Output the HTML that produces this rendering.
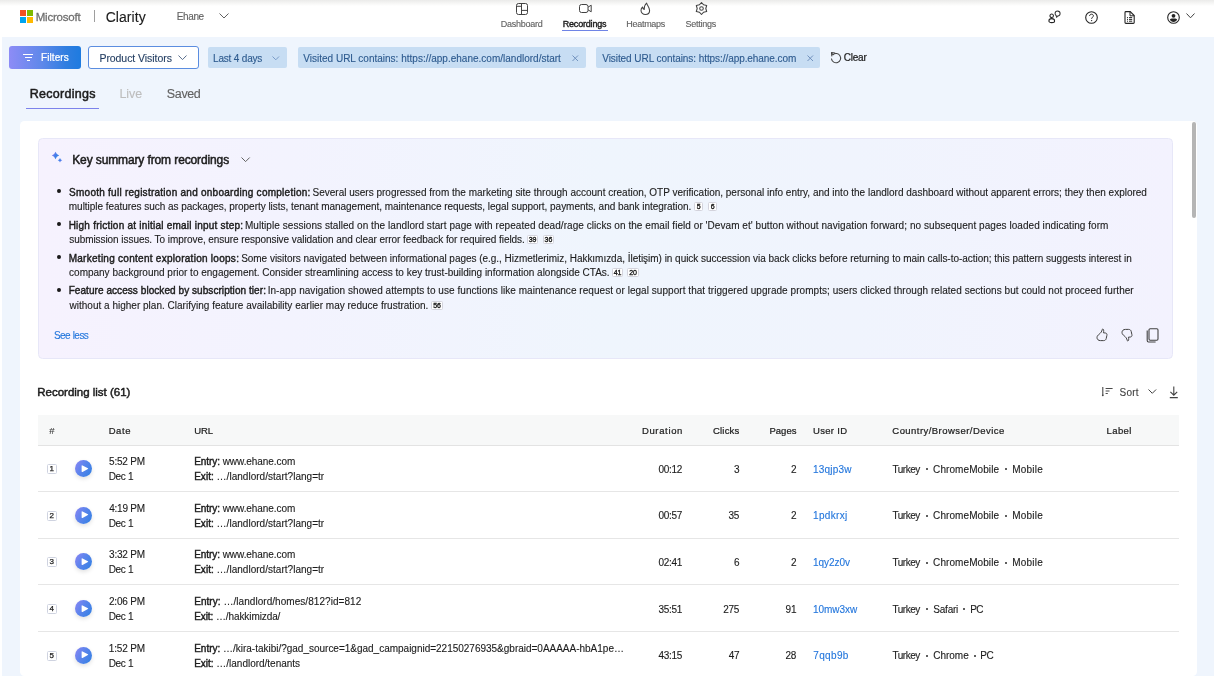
<!DOCTYPE html>
<html><head><meta charset="utf-8"><title>Clarity Recordings</title>
<style>
html,body{margin:0;padding:0;}
body{width:1214px;height:680px;position:relative;overflow:hidden;background:#ffffff;font-family:"Liberation Sans",sans-serif;}
.t{position:absolute;white-space:pre;line-height:1;font-family:"Liberation Sans",sans-serif;-webkit-text-stroke-width:0.12px;}
.t b{font-weight:400;}
.a{position:absolute;}
.bd{box-sizing:border-box;border:1px solid #d3d3dc;border-radius:1.5px;background:#fff;font:400 7px/7px 'Liberation Sans',sans-serif;-webkit-text-stroke:0.35px #1c1c1c;color:#1c1c1c;text-align:center;letter-spacing:-0.1px;will-change:transform}
.ix{box-sizing:border-box;border:1px solid #cfd3e0;border-radius:1.5px;background:#fff;font:400 8px/7.8px 'Liberation Sans',sans-serif;-webkit-text-stroke:0.25px #1c1c1c;color:#1c1c1c;text-align:center;will-change:transform}
.pb{width:17px;height:17px;border-radius:50%;background:linear-gradient(120deg,#8d86f4 0%,#5b84ec 45%,#2f80e2 100%);box-shadow:0 2px 4px rgba(0,0,0,0.12)}
svg{position:absolute;overflow:visible;}
</style></head><body>
<!-- top shadow -->
<div class="a" style="left:0;top:0;width:1214px;height:6px;background:linear-gradient(#ebebea,rgba(255,255,255,0))"></div>
<!-- page bg -->
<div class="a" style="left:2px;top:37px;width:1212px;height:639px;background:#eff5fd"></div>
<!-- MS logo -->
<div class="a" style="left:20px;top:10px;width:6px;height:6px;background:#f25022"></div>
<div class="a" style="left:27px;top:10px;width:6px;height:6px;background:#7fba00"></div>
<div class="a" style="left:20px;top:17px;width:6px;height:6px;background:#00a4ef"></div>
<div class="a" style="left:27px;top:17px;width:6px;height:6px;background:#ffb900"></div>
<div class="a" style="left:93.5px;top:9.5px;width:1.2px;height:12.5px;background:#9e9e9e"></div>
<svg style="left:219px;top:13px" width="10" height="6" viewBox="0 0 10 6"><path d="M0.5 0.5 L5 5 L9.5 0.5" fill="none" stroke="#616161" stroke-width="1"/></svg>
<!-- nav icons -->
<svg style="left:516px;top:3px" width="12" height="12" viewBox="0 0 12 12"><rect x="0.5" y="0.5" width="11" height="11" rx="2" fill="none" stroke="#424242" stroke-width="1"/><path d="M5.5 0.5V11.5M0.5 3.3H5.5M5.5 7.4H11.5" stroke="#424242" stroke-width="1" fill="none"/></svg>
<svg style="left:578.5px;top:4px" width="13" height="9" viewBox="0 0 13 9"><rect x="0.5" y="0.5" width="8.5" height="8" rx="2" fill="none" stroke="#424242" stroke-width="1"/><path d="M9 3.2 L12.2 1.2 V7.8 L9 5.8" fill="none" stroke="#424242" stroke-width="1" stroke-linejoin="round"/></svg>
<svg style="left:640px;top:2px" width="11" height="13" viewBox="0 0 11 13"><path d="M6.6 1 C6.9 3.2 9.6 5 9.6 8.4 C9.6 10.8 7.8 12.4 5.4 12.4 C3 12.4 1 10.8 1 8.5 C1 7 1.6 5.8 2.6 5 C2.7 6.4 3.3 7.2 4.2 7.5 C4 5.2 5 2.6 6.6 1 Z" fill="none" stroke="#424242" stroke-width="1.05" stroke-linejoin="round"/></svg>
<svg style="left:695px;top:2px" width="13" height="13" viewBox="0 0 13 13"><path d="M6.50 0.50 L8.65 2.78 L11.70 3.50 L10.80 6.50 L11.70 9.50 L8.65 10.22 L6.50 12.50 L4.35 10.22 L1.30 9.50 L2.20 6.50 L1.30 3.50 L4.35 2.78 Z" fill="none" stroke="#424242" stroke-width="1.05" stroke-linejoin="round"/><circle cx="6.5" cy="6.5" r="1.8" fill="none" stroke="#424242" stroke-width="1.05"/></svg>
<div class="a" style="left:562px;top:29.5px;width:46px;height:1.5px;background:#6f84e6"></div>
<!-- right header icons -->
<svg style="left:1047px;top:10px" width="16" height="14" viewBox="0 0 16 14"><circle cx="4.7" cy="5.8" r="1.75" fill="none" stroke="#242424" stroke-width="1.05"/><path d="M1.9 10.9 C1.9 9.4 3 8.6 4.7 8.6 C6.4 8.6 7.6 9.4 7.6 10.9 C7.6 12 6.5 12.6 4.7 12.6 C2.9 12.6 1.9 12 1.9 10.9 Z" fill="none" stroke="#242424" stroke-width="1.05"/><path d="M10.6 1.1 C12 1.1 13.1 2.2 13.1 3.6 C13.1 5 12 6.1 10.6 6.1 L9.5 7.3 L9.3 5.8 C8.6 5.3 8.1 4.5 8.1 3.6 C8.1 2.2 9.2 1.1 10.6 1.1 Z" fill="none" stroke="#3a3a3a" stroke-width="1.05" stroke-linejoin="round"/></svg>
<svg style="left:1085px;top:10.5px" width="13" height="13" viewBox="0 0 13 13"><circle cx="6.5" cy="6.5" r="5.8" fill="none" stroke="#242424" stroke-width="1.1"/><path d="M4.6 5 C4.6 3.8 5.5 3.2 6.5 3.2 C7.5 3.2 8.4 3.8 8.4 4.9 C8.4 6.2 6.6 6.3 6.6 7.8" fill="none" stroke="#242424" stroke-width="1"/><circle cx="6.6" cy="9.6" r="0.7" fill="#242424"/></svg>
<svg style="left:1123.5px;top:10.5px" width="11" height="13" viewBox="0 0 11 13"><path d="M1 1.5 C1 1 1.4 0.6 1.9 0.6 H6.2 L10.2 4.6 V11.6 C10.2 12.1 9.8 12.4 9.3 12.4 H1.9 C1.4 12.4 1 12.1 1 11.6 Z" fill="none" stroke="#242424" stroke-width="1.1"/><path d="M6 0.6 V4.8 H10.2" fill="none" stroke="#242424" stroke-width="1"/><path d="M3 6.6 H4 M5 6.6 H8.2 M3 8.4 H4 M5 8.4 H8.2 M3 10.2 H4 M5 10.2 H8.2" stroke="#242424" stroke-width="1"/></svg>
<svg style="left:1166.5px;top:10.5px" width="13" height="13" viewBox="0 0 13 13"><circle cx="6.5" cy="6.5" r="5.8" fill="none" stroke="#242424" stroke-width="1.1"/><circle cx="6.5" cy="4.8" r="1.9" fill="#242424"/><path d="M2.8 8.6 C3.2 7.7 4 7.4 6.5 7.4 C9 7.4 9.8 7.7 10.2 8.6 C9.5 10.2 8.2 11 6.5 11 C4.8 11 3.5 10.2 2.8 8.6 Z" fill="#242424"/></svg>
<svg style="left:1186px;top:13px" width="10" height="6" viewBox="0 0 10 6"><path d="M0.5 0.5 L4.5 4.8 L8.5 0.5" fill="none" stroke="#424242" stroke-width="1"/></svg>
<!-- filter bar -->
<div class="a" style="left:9px;top:46px;width:71.5px;height:23px;border-radius:3px;background:linear-gradient(90deg,#8d8cf6 0%,#5f88ea 45%,#2f7ee0 80%,#1e7be0 100%)"></div>
<div class="a" style="left:23.3px;top:54px;width:10px;height:1.2px;background:#fff"></div>
<div class="a" style="left:25px;top:57px;width:6.6px;height:1.2px;background:#fff"></div>
<div class="a" style="left:26.6px;top:60px;width:3.4px;height:1.2px;background:#fff"></div>
<div class="a" style="left:87.6px;top:46.2px;width:109px;height:20.4px;border:1px solid #5b8de0;border-radius:3px;background:#fff"></div>
<svg style="left:177.5px;top:55px" width="10" height="6" viewBox="0 0 10 6"><path d="M0.5 0.5 L4.5 4.6 L8.5 0.5" fill="none" stroke="#5a6f8e" stroke-width="1"/></svg>
<div class="a" style="left:208px;top:47px;width:79px;height:21px;border-radius:2px;background:#c7ddf3"></div>
<svg style="left:271.5px;top:56px" width="8" height="5" viewBox="0 0 8 5"><path d="M0.5 0.5 L3.8 3.8 L7 0.5" fill="none" stroke="#7a9cc8" stroke-width="1"/></svg>
<div class="a" style="left:297.7px;top:47px;width:288px;height:20.7px;border-radius:2px;background:#c7ddf3"></div>
<svg style="left:572px;top:55px" width="7" height="7" viewBox="0 0 7 7"><path d="M0.5 0.5 L6 6 M6 0.5 L0.5 6" stroke="#6d8dba" stroke-width="0.95"/></svg>
<div class="a" style="left:596.4px;top:47px;width:224px;height:20.7px;border-radius:2px;background:#c7ddf3"></div>
<svg style="left:807px;top:55px" width="7" height="7" viewBox="0 0 7 7"><path d="M0.5 0.5 L6 6 M6 0.5 L0.5 6" stroke="#6d8dba" stroke-width="0.95"/></svg>
<svg style="left:829.5px;top:51px" width="12" height="13" viewBox="0 0 12 13"><path d="M1.6 2 L2.9 3.8 A4.6 4.6 0 1 1 1.5 7.9" fill="none" stroke="#424242" stroke-width="1.05" stroke-linecap="round"/><path d="M4.9 1.9 L1.5 1.6 L1.8 5" fill="none" stroke="#424242" stroke-width="1.05" stroke-linejoin="round" stroke-linecap="round"/></svg>
<!-- tabs underline -->
<div class="a" style="left:26px;top:107.6px;width:73px;height:1.6px;background:#7c83eb"></div>
<!-- card -->
<div class="a" style="left:20.4px;top:121px;width:1176.7px;height:554.5px;border-radius:4.5px;background:#ffffff"></div>
<div class="a" style="left:1191.8px;top:122px;width:4.4px;height:95.6px;border-radius:2.2px;background:#b5b5b5"></div>
<!-- summary panel -->
<div class="a" style="left:37.8px;top:138px;width:1133.2px;height:218.5px;border-radius:4.5px;border:1px solid #e7e7f8;background:linear-gradient(90deg,#f6f2fe 0%,#f3f3fe 22%,#eff5fd 50%,#f0f4fd 72%,#f3f2fe 100%)"></div>
<svg style="left:51px;top:151px" width="13" height="12" viewBox="0 0 13 12"><defs><linearGradient id="sg" x1="0" y1="0.2" x2="1" y2="0.8"><stop offset="0" stop-color="#9b7df5"/><stop offset="0.5" stop-color="#3f7fe8"/><stop offset="1" stop-color="#3a84e6"/></linearGradient><linearGradient id="sg2" x1="0" y1="0" x2="1" y2="1"><stop offset="0" stop-color="#3a84e6"/><stop offset="0.6" stop-color="#4a80ec"/><stop offset="1" stop-color="#9b7df5"/></linearGradient></defs><path d="M4.5 0.8 Q5.4 3.6 8.2 4.5 Q5.4 5.4 4.5 8.2 Q3.6 5.4 0.8 4.5 Q3.6 3.6 4.5 0.8 Z" fill="url(#sg)"/><path d="M9 6.9 Q9.5 8.7 11.3 9.2 Q9.5 9.7 9 11.5 Q8.5 9.7 6.7 9.2 Q8.5 8.7 9 6.9 Z" fill="url(#sg2)"/></svg>
<svg style="left:240.5px;top:156.5px" width="10" height="6" viewBox="0 0 10 6"><path d="M0.5 0.5 L4.6 4.6 L8.7 0.5" fill="none" stroke="#616161" stroke-width="1"/></svg>
<!-- bullets --><div class="a" style="left:56.9px;top:189.35px;width:3.8px;height:3.8px;border-radius:50%;background:#1a1a1a"></div><div class="a" style="left:56.9px;top:222.35px;width:3.8px;height:3.8px;border-radius:50%;background:#1a1a1a"></div><div class="a" style="left:56.9px;top:255.25px;width:3.8px;height:3.8px;border-radius:50%;background:#1a1a1a"></div><div class="a" style="left:56.9px;top:288.15px;width:3.8px;height:3.8px;border-radius:50%;background:#1a1a1a"></div>




<!-- badges -->
<div class="a bd" style="left:694.4px;top:201.6px;width:9.2px;height:9px">5</div><div class="a bd" style="left:707.5px;top:201.6px;width:9.3px;height:9px">6</div><div class="a bd" style="left:527.4px;top:234.5px;width:10.9px;height:9px">39</div><div class="a bd" style="left:542.6px;top:234.5px;width:10.8px;height:9px">36</div><div class="a bd" style="left:612.0px;top:267.9px;width:11.2px;height:9px">41</div><div class="a bd" style="left:626.8px;top:267.9px;width:11.9px;height:9px">20</div><div class="a bd" style="left:431.3px;top:300.8px;width:11.9px;height:9px">56</div>
<!-- feedback icons -->
<svg style="left:1095.5px;top:328px" width="12" height="14" viewBox="0 0 12 14"><path d="M6.8 1 C7.8 1.2 7.9 2.8 7.4 4.8 L9.5 5 C10.6 5.1 11.2 6.2 10.9 7.4 L10.2 10.6 C9.9 11.9 8.9 12.6 7.6 12.6 H4.4 C2.3 12.6 1 11.3 1 9.6 C1 8.1 1.9 7.2 3.1 6.3 C4.6 5.1 5.8 3.6 6.2 1.7 C6.3 1.2 6.5 1 6.8 1 Z" fill="none" stroke="#424242" stroke-width="1" stroke-linejoin="round"/></svg>
<svg style="left:1120.5px;top:327.5px" width="12" height="14" viewBox="0 0 12 14"><path transform="translate(0 14) scale(1 -1)" d="M6.8 1 C7.8 1.2 7.9 2.8 7.4 4.8 L9.5 5 C10.6 5.1 11.2 6.2 10.9 7.4 L10.2 10.6 C9.9 11.9 8.9 12.6 7.6 12.6 H4.4 C2.3 12.6 1 11.3 1 9.6 C1 8.1 1.9 7.2 3.1 6.3 C4.6 5.1 5.8 3.6 6.2 1.7 C6.3 1.2 6.5 1 6.8 1 Z" fill="none" stroke="#424242" stroke-width="1" stroke-linejoin="round"/></svg>
<svg style="left:1145.5px;top:327.5px" width="13" height="15" viewBox="0 0 13 15"><rect x="3" y="0.7" width="9" height="11.6" rx="1.2" fill="none" stroke="#424242" stroke-width="1.1"/><path d="M1.2 2.6 V12.6 C1.2 13.4 1.8 14 2.6 14 H9.6" fill="none" stroke="#424242" stroke-width="1.1"/></svg>
<!-- sort / download -->
<svg style="left:1100px;top:386px" width="14" height="11" viewBox="0 0 14 11"><path d="M2.8 1 V9.2" fill="none" stroke="#424242" stroke-width="1.05"/><circle cx="2.8" cy="9.3" r="0.9" fill="#424242"/><path d="M5.6 2.5 H12.6 M5.6 5 H9.5 M5.6 7.5 H7.8" stroke="#4a4a4a" stroke-width="1"/></svg>
<svg style="left:1147.5px;top:389px" width="10" height="6" viewBox="0 0 10 6"><path d="M0.5 0.5 L4.3 4.3 L8.1 0.5" fill="none" stroke="#424242" stroke-width="1"/></svg>
<svg style="left:1168.5px;top:385.5px" width="10" height="13" viewBox="0 0 10 13"><path d="M4.8 0.5 V9 M1.4 5.8 L4.8 9.2 L8.2 5.8 M0.8 11.6 H8.8" fill="none" stroke="#424242" stroke-width="1.1"/></svg>
<!-- table -->
<div class="a" style="left:38px;top:415px;width:1141px;height:30px;background:#f7f8f8;border-bottom:1px solid #e3e3e3"></div>
<div class="a ix" style="left:47.2px;top:463.90px;width:9.6px;height:9.6px">1</div><div class="a pb" style="left:75px;top:460.00px"></div><svg style="left:80.5px;top:464.70px" width="8" height="8" viewBox="0 0 8 8"><path d="M0.6 1 Q0.6 0 1.5 0.4 L6.9 3.2 Q7.6 3.6 6.9 4 L1.5 6.9 Q0.6 7.3 0.6 6.3 Z" fill="#fff"/></svg><div class="a" style="left:38px;top:491.15px;width:1141px;height:1px;background:#e6e6e6"></div><div class="a ix" style="left:47.2px;top:510.55px;width:9.6px;height:9.6px">2</div><div class="a pb" style="left:75px;top:506.65px"></div><svg style="left:80.5px;top:511.35px" width="8" height="8" viewBox="0 0 8 8"><path d="M0.6 1 Q0.6 0 1.5 0.4 L6.9 3.2 Q7.6 3.6 6.9 4 L1.5 6.9 Q0.6 7.3 0.6 6.3 Z" fill="#fff"/></svg><div class="a" style="left:38px;top:537.80px;width:1141px;height:1px;background:#e6e6e6"></div><div class="a ix" style="left:47.2px;top:557.20px;width:9.6px;height:9.6px">3</div><div class="a pb" style="left:75px;top:553.30px"></div><svg style="left:80.5px;top:558.00px" width="8" height="8" viewBox="0 0 8 8"><path d="M0.6 1 Q0.6 0 1.5 0.4 L6.9 3.2 Q7.6 3.6 6.9 4 L1.5 6.9 Q0.6 7.3 0.6 6.3 Z" fill="#fff"/></svg><div class="a" style="left:38px;top:584.45px;width:1141px;height:1px;background:#e6e6e6"></div><div class="a ix" style="left:47.2px;top:603.85px;width:9.6px;height:9.6px">4</div><div class="a pb" style="left:75px;top:599.95px"></div><svg style="left:80.5px;top:604.65px" width="8" height="8" viewBox="0 0 8 8"><path d="M0.6 1 Q0.6 0 1.5 0.4 L6.9 3.2 Q7.6 3.6 6.9 4 L1.5 6.9 Q0.6 7.3 0.6 6.3 Z" fill="#fff"/></svg><div class="a" style="left:38px;top:631.10px;width:1141px;height:1px;background:#e6e6e6"></div><div class="a ix" style="left:47.2px;top:650.50px;width:9.6px;height:9.6px">5</div><div class="a pb" style="left:75px;top:646.60px"></div><svg style="left:80.5px;top:651.30px" width="8" height="8" viewBox="0 0 8 8"><path d="M0.6 1 Q0.6 0 1.5 0.4 L6.9 3.2 Q7.6 3.6 6.9 4 L1.5 6.9 Q0.6 7.3 0.6 6.3 Z" fill="#fff"/></svg><div class="a" style="left:926.00px;top:468.20px;width:2.2px;height:2.2px;border-radius:50%;background:#2a2a2a"></div><div class="a" style="left:1004.70px;top:468.20px;width:2.2px;height:2.2px;border-radius:50%;background:#2a2a2a"></div><div class="a" style="left:926.00px;top:514.85px;width:2.2px;height:2.2px;border-radius:50%;background:#2a2a2a"></div><div class="a" style="left:1004.70px;top:514.85px;width:2.2px;height:2.2px;border-radius:50%;background:#2a2a2a"></div><div class="a" style="left:926.00px;top:561.50px;width:2.2px;height:2.2px;border-radius:50%;background:#2a2a2a"></div><div class="a" style="left:1004.70px;top:561.50px;width:2.2px;height:2.2px;border-radius:50%;background:#2a2a2a"></div><div class="a" style="left:926.00px;top:608.15px;width:2.2px;height:2.2px;border-radius:50%;background:#2a2a2a"></div><div class="a" style="left:963.30px;top:608.15px;width:2.2px;height:2.2px;border-radius:50%;background:#2a2a2a"></div><div class="a" style="left:926.00px;top:654.80px;width:2.2px;height:2.2px;border-radius:50%;background:#2a2a2a"></div><div class="a" style="left:974.00px;top:654.80px;width:2.2px;height:2.2px;border-radius:50%;background:#2a2a2a"></div>

<div class="a" style="left:0;top:0;width:1214px;height:680px;will-change:transform"><span class="t" style="left:35.76px;top:11.57px;font-size:11.5px;letter-spacing:-0.215px;word-spacing:0.129px;color:#6e6e6e"><b style="-webkit-text-stroke-width:0.26px">Microsoft</b></span><span class="t" style="left:105.69px;top:10.15px;font-size:14px;letter-spacing:0.045px;word-spacing:0.000px;color:#1c1c1c">Clarity</span><span class="t" style="left:176.78px;top:12.04px;font-size:10px;letter-spacing:-0.388px;word-spacing:0.233px;color:#616161">Ehane</span><span class="t" style="left:500.76px;top:19.58px;font-size:9px;letter-spacing:-0.251px;word-spacing:0.151px;color:#616161">Dashboard</span><span class="t" style="left:562.76px;top:19.58px;font-size:9px;letter-spacing:-0.195px;word-spacing:0.117px;color:#1c1c1c"><b style="-webkit-text-stroke-width:0.39px">Recordings</b></span><span class="t" style="left:626.26px;top:19.58px;font-size:9px;letter-spacing:-0.279px;word-spacing:0.168px;color:#616161">Heatmaps</span><span class="t" style="left:685.59px;top:19.58px;font-size:9px;letter-spacing:-0.255px;word-spacing:0.153px;color:#616161">Settings</span><span class="t" style="left:40.98px;top:53.14px;font-size:10px;letter-spacing:0.093px;word-spacing:0.000px;color:#ffffff"><b style="-webkit-text-stroke-width:0.23px">Filters</b></span><span class="t" style="left:99.44px;top:53.01px;font-size:10.5px;letter-spacing:-0.062px;word-spacing:0.037px;color:#1f3a5f">Product Visitors</span><span class="t" style="left:213.08px;top:53.84px;font-size:10px;letter-spacing:-0.223px;word-spacing:0.134px;color:#2d5a8e">Last 4 days</span><span class="t" style="left:303.26px;top:53.53px;font-size:10px;letter-spacing:0.005px;word-spacing:0.000px;color:#2d5a8e">Visited URL contains: https://app.ehane.com/landlord/start</span><span class="t" style="left:602.26px;top:53.53px;font-size:10px;letter-spacing:-0.068px;word-spacing:0.041px;color:#2d5a8e">Visited URL contains: https://app.ehane.com</span><span class="t" style="left:843.79px;top:53.14px;font-size:10px;letter-spacing:-0.231px;word-spacing:0.138px;color:#1c1c1c"><b style="-webkit-text-stroke-width:0.23px">Clear</b></span><span class="t" style="left:29.67px;top:87.92px;font-size:12.5px;letter-spacing:0.283px;word-spacing:0.000px;color:#1c1c1c"><b style="-webkit-text-stroke-width:0.51px">Recordings</b></span><span class="t" style="left:119.47px;top:87.92px;font-size:12.5px;letter-spacing:-0.083px;word-spacing:0.050px;color:#bdbdbd">Live</span><span class="t" style="left:166.83px;top:87.92px;font-size:12.5px;letter-spacing:-0.367px;word-spacing:0.220px;color:#616161">Saved</span><span class="t" style="left:72.22px;top:153.74px;font-size:12px;letter-spacing:-0.129px;word-spacing:0.077px;color:#1c1c1c"><b style="-webkit-text-stroke-width:0.49px">Key summary from recordings</b></span><span class="t" style="left:69.05px;top:187.63px;font-size:10px;letter-spacing:0.256px;word-spacing:0.000px;color:#1c1c1c"><b style="-webkit-text-stroke-width:0.42px">Smooth full registration and onboarding completion:</b></span><span class="t" style="left:312.55px;top:187.63px;font-size:10px;letter-spacing:-0.001px;word-spacing:0.001px;color:#1c1c1c">Several users progressed from the marketing site through account creation, OTP verification, personal info entry, and into the landlord dashboard without apparent errors; they then explored</span><span class="t" style="left:68.84px;top:201.63px;font-size:10px;letter-spacing:-0.040px;word-spacing:0.024px;color:#1c1c1c">multiple features such as packages, property lists, tenant management, maintenance requests, legal support, payments, and bank integration.</span><span class="t" style="left:68.68px;top:220.63px;font-size:10px;letter-spacing:0.228px;word-spacing:0.000px;color:#1c1c1c"><b style="-webkit-text-stroke-width:0.42px">High friction at initial email input step:</b></span><span class="t" style="left:244.98px;top:220.63px;font-size:10px;letter-spacing:0.056px;word-spacing:0.000px;color:#1c1c1c">Multiple sessions stalled on the landlord start page with repeated dead/rage clicks on the email field or &#x27;Devam et&#x27; button without navigation forward; no subsequent pages loaded indicating form</span><span class="t" style="left:69.22px;top:234.53px;font-size:10px;letter-spacing:-0.064px;word-spacing:0.039px;color:#1c1c1c">submission issues. To improve, ensure responsive validation and clear error feedback for required fields.</span><span class="t" style="left:68.68px;top:253.53px;font-size:10px;letter-spacing:0.274px;word-spacing:0.000px;color:#1c1c1c"><b style="-webkit-text-stroke-width:0.42px">Marketing content exploration loops:</b></span><span class="t" style="left:241.15px;top:253.53px;font-size:10px;letter-spacing:-0.031px;word-spacing:0.019px;color:#1c1c1c">Some visitors navigated between informational pages (e.g., Hizmetlerimiz, Hakkımızda, İletişim) in quick succession via back clicks before returning to main calls-to-action; this pattern suggests interest in</span><span class="t" style="left:69.08px;top:267.94px;font-size:10px;letter-spacing:-0.006px;word-spacing:0.004px;color:#1c1c1c">company background prior to engagement. Consider streamlining access to key trust-building information alongside CTAs.</span><span class="t" style="left:68.68px;top:286.44px;font-size:10px;letter-spacing:0.063px;word-spacing:0.000px;color:#1c1c1c"><b style="-webkit-text-stroke-width:0.42px">Feature access blocked by subscription tier:</b></span><span class="t" style="left:267.68px;top:286.44px;font-size:10px;letter-spacing:0.046px;word-spacing:0.000px;color:#1c1c1c">In-app navigation showed attempts to use functions like maintenance request or legal support that triggered upgrade prompts; users clicked through related sections but could not proceed further</span><span class="t" style="left:69.51px;top:300.84px;font-size:10px;letter-spacing:0.010px;word-spacing:0.000px;color:#1c1c1c">without a higher plan. Clarifying feature availability earlier may reduce frustration.</span><span class="t" style="left:53.95px;top:331.24px;font-size:10px;letter-spacing:-0.537px;word-spacing:0.322px;color:#2376dc">See less</span><span class="t" style="left:37.26px;top:386.97px;font-size:11.5px;letter-spacing:-0.009px;word-spacing:0.006px;color:#1c1c1c"><b style="-webkit-text-stroke-width:0.47px">Recording list (61)</b></span><span class="t" style="left:1119.55px;top:387.84px;font-size:10px;letter-spacing:0.196px;word-spacing:0.000px;color:#424242">Sort</span><span class="t" style="left:49.26px;top:425.76px;font-size:9.5px;letter-spacing:0.000px;word-spacing:0.000px;color:#3a3a3a">#</span><span class="t" style="left:108.72px;top:425.76px;font-size:9.5px;letter-spacing:0.545px;word-spacing:0.000px;color:#1c1c1c"><b style="-webkit-text-stroke-width:0.22px">Date</b></span><span class="t" style="left:194.27px;top:425.76px;font-size:9.5px;letter-spacing:-0.078px;word-spacing:0.047px;color:#1c1c1c"><b style="-webkit-text-stroke-width:0.22px">URL</b></span><span class="t" style="left:641.92px;top:425.76px;font-size:9.5px;letter-spacing:0.655px;word-spacing:0.000px;color:#1c1c1c"><b style="-webkit-text-stroke-width:0.22px">Duration</b></span><span class="t" style="left:712.92px;top:425.76px;font-size:9.5px;letter-spacing:0.219px;word-spacing:0.000px;color:#1c1c1c"><b style="-webkit-text-stroke-width:0.22px">Clicks</b></span><span class="t" style="left:769.42px;top:425.76px;font-size:9.5px;letter-spacing:0.046px;word-spacing:0.000px;color:#1c1c1c"><b style="-webkit-text-stroke-width:0.22px">Pages</b></span><span class="t" style="left:813.07px;top:425.76px;font-size:9.5px;letter-spacing:0.298px;word-spacing:0.000px;color:#1c1c1c"><b style="-webkit-text-stroke-width:0.22px">User ID</b></span><span class="t" style="left:892.32px;top:425.76px;font-size:9.5px;letter-spacing:0.452px;word-spacing:0.000px;color:#1c1c1c"><b style="-webkit-text-stroke-width:0.22px">Country/Browser/Device</b></span><span class="t" style="left:1106.52px;top:425.76px;font-size:9.5px;letter-spacing:0.418px;word-spacing:0.000px;color:#1c1c1c"><b style="-webkit-text-stroke-width:0.22px">Label</b></span><span class="t" style="left:109.10px;top:457.04px;font-size:10px;letter-spacing:-0.226px;word-spacing:0.136px;color:#1c1c1c">5:52 PM</span><span class="t" style="left:108.68px;top:472.04px;font-size:10px;letter-spacing:-0.328px;word-spacing:0.197px;color:#1c1c1c">Dec 1</span><span class="t" style="left:194.18px;top:457.04px;font-size:10px;letter-spacing:-0.059px;word-spacing:0.035px;color:#1c1c1c"><b style="-webkit-text-stroke-width:0.42px">Entry:</b> www.ehane.com</span><span class="t" style="left:194.18px;top:472.04px;font-size:10px;letter-spacing:0.026px;word-spacing:0.000px;color:#1c1c1c"><b style="-webkit-text-stroke-width:0.42px">Exit:</b> …/landlord/start?lang=tr</span><span class="t" style="left:658.41px;top:464.84px;font-size:10px;letter-spacing:-0.283px;word-spacing:0.170px;color:#1c1c1c">00:12</span><span class="t" style="left:733.88px;top:464.84px;font-size:10px;letter-spacing:-0.250px;word-spacing:0.150px;color:#1c1c1c">3</span><span class="t" style="left:790.94px;top:464.84px;font-size:10px;letter-spacing:-0.250px;word-spacing:0.150px;color:#1c1c1c">2</span><span class="t" style="left:813.04px;top:464.84px;font-size:10px;letter-spacing:0.214px;word-spacing:0.000px;color:#2376dc">13qjp3w</span><span class="t" style="left:892.58px;top:464.84px;font-size:10px;letter-spacing:-0.509px;word-spacing:0.306px;color:#1c1c1c">Turkey</span><span class="t" style="left:933.09px;top:464.84px;font-size:10px;letter-spacing:0.084px;word-spacing:0.000px;color:#1c1c1c">ChromeMobile</span><span class="t" style="left:1012.18px;top:464.84px;font-size:10px;letter-spacing:0.221px;word-spacing:0.000px;color:#1c1c1c">Mobile</span><span class="t" style="left:109.27px;top:503.69px;font-size:10px;letter-spacing:-0.258px;word-spacing:0.155px;color:#1c1c1c">4:19 PM</span><span class="t" style="left:108.68px;top:518.68px;font-size:10px;letter-spacing:-0.328px;word-spacing:0.197px;color:#1c1c1c">Dec 1</span><span class="t" style="left:194.18px;top:503.69px;font-size:10px;letter-spacing:-0.059px;word-spacing:0.035px;color:#1c1c1c"><b style="-webkit-text-stroke-width:0.42px">Entry:</b> www.ehane.com</span><span class="t" style="left:194.18px;top:518.68px;font-size:10px;letter-spacing:0.026px;word-spacing:0.000px;color:#1c1c1c"><b style="-webkit-text-stroke-width:0.42px">Exit:</b> …/landlord/start?lang=tr</span><span class="t" style="left:658.41px;top:511.49px;font-size:10px;letter-spacing:-0.283px;word-spacing:0.170px;color:#1c1c1c">00:57</span><span class="t" style="left:728.55px;top:511.49px;font-size:10px;letter-spacing:-0.250px;word-spacing:0.150px;color:#1c1c1c">35</span><span class="t" style="left:790.94px;top:511.49px;font-size:10px;letter-spacing:-0.250px;word-spacing:0.150px;color:#1c1c1c">2</span><span class="t" style="left:813.04px;top:511.49px;font-size:10px;letter-spacing:0.333px;word-spacing:0.000px;color:#2376dc">1pdkrxj</span><span class="t" style="left:892.58px;top:511.49px;font-size:10px;letter-spacing:-0.509px;word-spacing:0.306px;color:#1c1c1c">Turkey</span><span class="t" style="left:933.09px;top:511.49px;font-size:10px;letter-spacing:0.084px;word-spacing:0.000px;color:#1c1c1c">ChromeMobile</span><span class="t" style="left:1012.18px;top:511.49px;font-size:10px;letter-spacing:0.221px;word-spacing:0.000px;color:#1c1c1c">Mobile</span><span class="t" style="left:109.12px;top:550.33px;font-size:10px;letter-spacing:-0.230px;word-spacing:0.138px;color:#1c1c1c">3:32 PM</span><span class="t" style="left:108.68px;top:565.33px;font-size:10px;letter-spacing:-0.328px;word-spacing:0.197px;color:#1c1c1c">Dec 1</span><span class="t" style="left:194.18px;top:550.33px;font-size:10px;letter-spacing:-0.059px;word-spacing:0.035px;color:#1c1c1c"><b style="-webkit-text-stroke-width:0.42px">Entry:</b> www.ehane.com</span><span class="t" style="left:194.18px;top:565.33px;font-size:10px;letter-spacing:0.026px;word-spacing:0.000px;color:#1c1c1c"><b style="-webkit-text-stroke-width:0.42px">Exit:</b> …/landlord/start?lang=tr</span><span class="t" style="left:658.41px;top:558.13px;font-size:10px;letter-spacing:-0.286px;word-spacing:0.172px;color:#1c1c1c">02:41</span><span class="t" style="left:733.88px;top:558.13px;font-size:10px;letter-spacing:-0.250px;word-spacing:0.150px;color:#1c1c1c">6</span><span class="t" style="left:790.94px;top:558.13px;font-size:10px;letter-spacing:-0.250px;word-spacing:0.150px;color:#1c1c1c">2</span><span class="t" style="left:813.04px;top:558.13px;font-size:10px;letter-spacing:-0.042px;word-spacing:0.025px;color:#2376dc">1qy2z0v</span><span class="t" style="left:892.58px;top:558.13px;font-size:10px;letter-spacing:-0.509px;word-spacing:0.306px;color:#1c1c1c">Turkey</span><span class="t" style="left:933.09px;top:558.13px;font-size:10px;letter-spacing:0.084px;word-spacing:0.000px;color:#1c1c1c">ChromeMobile</span><span class="t" style="left:1012.18px;top:558.13px;font-size:10px;letter-spacing:0.221px;word-spacing:0.000px;color:#1c1c1c">Mobile</span><span class="t" style="left:109.00px;top:596.99px;font-size:10px;letter-spacing:-0.207px;word-spacing:0.124px;color:#1c1c1c">2:06 PM</span><span class="t" style="left:108.68px;top:611.99px;font-size:10px;letter-spacing:-0.328px;word-spacing:0.197px;color:#1c1c1c">Dec 1</span><span class="t" style="left:194.18px;top:596.99px;font-size:10px;letter-spacing:0.050px;word-spacing:0.000px;color:#1c1c1c"><b style="-webkit-text-stroke-width:0.42px">Entry:</b> …/landlord/homes/812?id=812</span><span class="t" style="left:194.18px;top:611.99px;font-size:10px;letter-spacing:-0.091px;word-spacing:0.055px;color:#1c1c1c"><b style="-webkit-text-stroke-width:0.42px">Exit:</b> …/hakkimizda/</span><span class="t" style="left:658.42px;top:604.79px;font-size:10px;letter-spacing:-0.289px;word-spacing:0.173px;color:#1c1c1c">35:51</span><span class="t" style="left:723.24px;top:604.79px;font-size:10px;letter-spacing:-0.250px;word-spacing:0.150px;color:#1c1c1c">275</span><span class="t" style="left:785.62px;top:604.79px;font-size:10px;letter-spacing:-0.250px;word-spacing:0.150px;color:#1c1c1c">91</span><span class="t" style="left:813.04px;top:604.79px;font-size:10px;letter-spacing:-0.037px;word-spacing:0.022px;color:#2376dc">10mw3xw</span><span class="t" style="left:892.58px;top:604.79px;font-size:10px;letter-spacing:-0.509px;word-spacing:0.306px;color:#1c1c1c">Turkey</span><span class="t" style="left:933.35px;top:604.79px;font-size:10px;letter-spacing:-0.239px;word-spacing:0.143px;color:#1c1c1c">Safari</span><span class="t" style="left:970.28px;top:604.79px;font-size:10px;letter-spacing:-0.790px;word-spacing:0.474px;color:#1c1c1c">PC</span><span class="t" style="left:108.74px;top:643.63px;font-size:10px;letter-spacing:-0.159px;word-spacing:0.095px;color:#1c1c1c">1:52 PM</span><span class="t" style="left:108.68px;top:658.63px;font-size:10px;letter-spacing:-0.328px;word-spacing:0.197px;color:#1c1c1c">Dec 1</span><span class="t" style="left:194.18px;top:643.63px;font-size:10px;letter-spacing:-0.010px;word-spacing:0.006px;color:#1c1c1c"><b style="-webkit-text-stroke-width:0.42px">Entry:</b> …/kira-takibi/?gad_source=1&amp;gad_campaignid=22150276935&amp;gbraid=0AAAAA-hbA1pe…</span><span class="t" style="left:194.18px;top:658.63px;font-size:10px;letter-spacing:-0.013px;word-spacing:0.008px;color:#1c1c1c"><b style="-webkit-text-stroke-width:0.42px">Exit:</b> …/landlord/tenants</span><span class="t" style="left:658.57px;top:651.44px;font-size:10px;letter-spacing:-0.344px;word-spacing:0.206px;color:#1c1c1c">43:15</span><span class="t" style="left:728.63px;top:651.44px;font-size:10px;letter-spacing:-0.250px;word-spacing:0.150px;color:#1c1c1c">47</span><span class="t" style="left:785.56px;top:651.44px;font-size:10px;letter-spacing:-0.250px;word-spacing:0.150px;color:#1c1c1c">28</span><span class="t" style="left:813.29px;top:651.44px;font-size:10px;letter-spacing:0.353px;word-spacing:0.000px;color:#2376dc">7qqb9b</span><span class="t" style="left:892.58px;top:651.44px;font-size:10px;letter-spacing:-0.509px;word-spacing:0.306px;color:#1c1c1c">Turkey</span><span class="t" style="left:933.29px;top:651.44px;font-size:10px;letter-spacing:-0.023px;word-spacing:0.014px;color:#1c1c1c">Chrome</span><span class="t" style="left:980.18px;top:651.44px;font-size:10px;letter-spacing:-0.290px;word-spacing:0.174px;color:#1c1c1c">PC</span></div>
</body></html>
